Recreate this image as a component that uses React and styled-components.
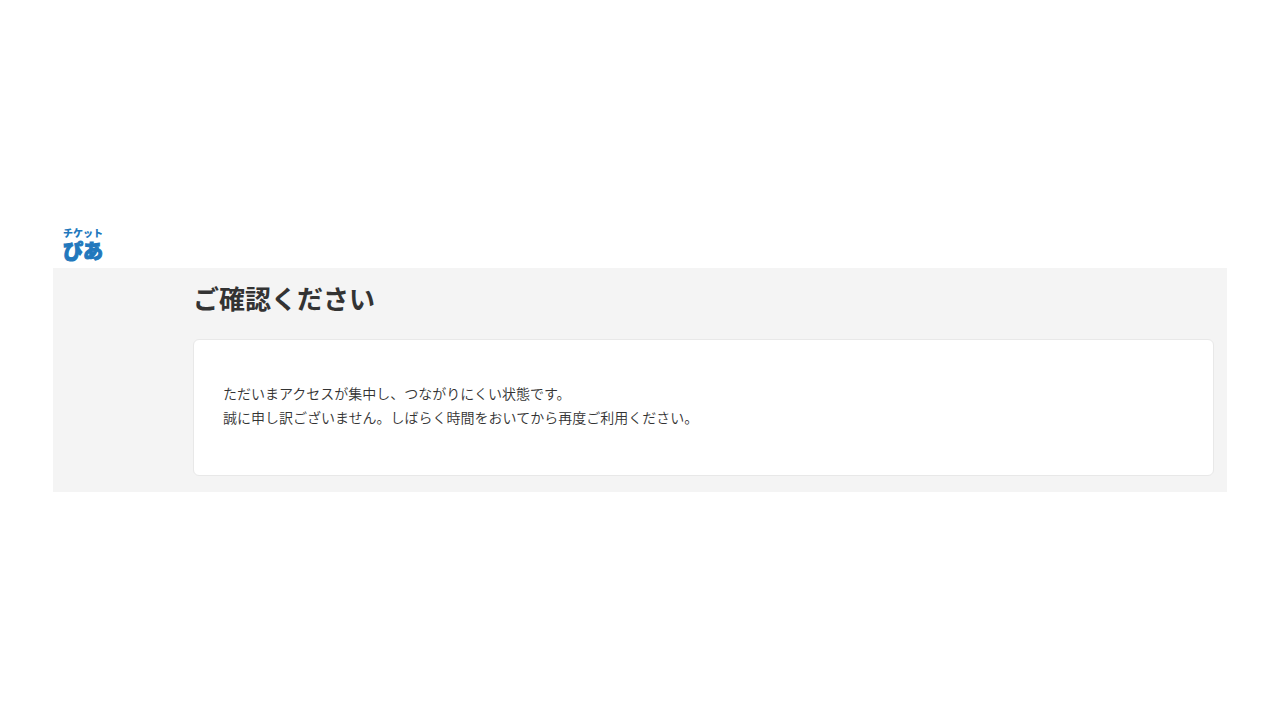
import React from "react";
import styled, { createGlobalStyle } from "styled-components";

const GlobalStyle = createGlobalStyle`
  *, *::before, *::after { box-sizing: border-box; }
  body {
    margin: 0;
    background: #fff;
    color: #333;
    font-family: "Noto Sans CJK JP", sans-serif;
  }
`;

const Page = styled.div`
  display: flex;
  flex-direction: column;
  justify-content: center;
  min-height: 100vh;
  padding: 0 53px;
`;

const Header = styled.header`
  display: flex;
  padding: 0 10px 4px;
`;

const Logo = styled.a`
  display: flex;
  flex-direction: column;
  color: #2278bd;
  font-family: "Liberation Sans", "Noto Sans CJK JP", sans-serif;
  font-weight: 900;
  text-decoration: none;
  white-space: nowrap;
`;

const LogoSmall = styled.span`
  font-size: 10px;
  line-height: 12px;
`;

const LogoLarge = styled.span`
  font-size: 20px;
  line-height: 24px;
  -webkit-text-stroke: 1px currentColor;
`;

const Main = styled.main`
  padding: 10px 13px 16px 140px;
  background: #f4f4f4;
`;

const Title = styled.h1`
  margin: 0 0 22px;
  font-size: 26px;
  font-weight: 700;
  line-height: 39px;
`;

const Notice = styled.section`
  padding: 41px 29px 46px;
  border: 1px solid #e8e8e8;
  border-radius: 6px;
  background: #fff;
`;

const Message = styled.p`
  margin: 0;
  font-size: 14px;
  font-weight: 350;
  line-height: 24px;
`;

export default function App() {
  return (
    <>
      <GlobalStyle />
      <Page lang="ja">
        <Header>
          <Logo href="#">
            <LogoSmall>チケット</LogoSmall>
            <LogoLarge>ぴあ</LogoLarge>
          </Logo>
        </Header>
        <Main>
          <Title>ご確認ください</Title>
          <Notice>
            <Message>
              ただいまアクセスが集中し、つながりにくい状態です。
              <br />
              誠に申し訳ございません。しばらく時間をおいてから再度ご利用ください。
            </Message>
          </Notice>
        </Main>
      </Page>
    </>
  );
}
